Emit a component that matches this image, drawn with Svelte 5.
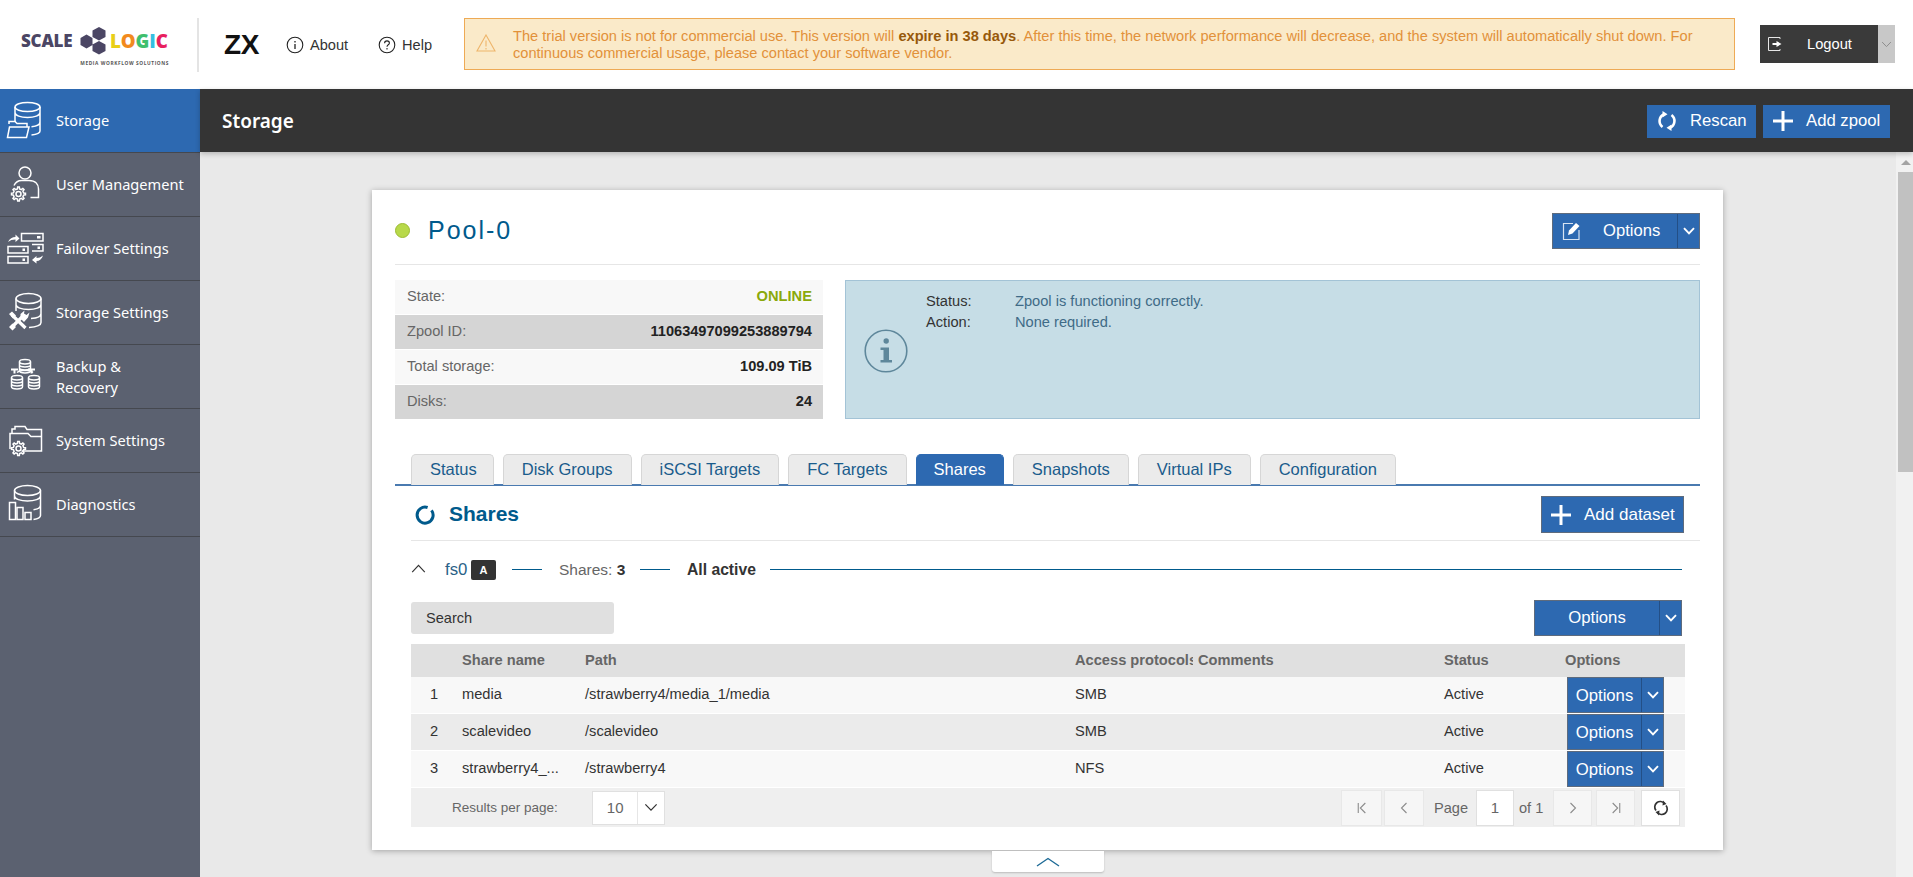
<script>
  const nav = [
    { k: 'storage', label: 'Storage', active: true },
    { k: 'user', label: 'User Management' },
    { k: 'failover', label: 'Failover Settings' },
    { k: 'settings', label: 'Storage Settings' },
    { k: 'backup', label: 'Backup & Recovery' },
    { k: 'system', label: 'System Settings' },
    { k: 'diag', label: 'Diagnostics' }
  ];
  const tabs = ['Status', 'Disk Groups', 'iSCSI Targets', 'FC Targets', 'Shares', 'Snapshots', 'Virtual IPs', 'Configuration'];
  const facts = [
    ['State:', 'ONLINE'],
    ['Zpool ID:', '11063497099253889794'],
    ['Total storage:', '109.09 TiB'],
    ['Disks:', '24']
  ];
  const rows = [
    ['1', 'media', '/strawberry4/media_1/media', 'SMB'],
    ['2', 'scalevideo', '/scalevideo', 'SMB'],
    ['3', 'strawberry4_...', '/strawberry4', 'NFS']
  ];
  function gear(cx, cy, r) {
    const n = 8;
    let d = '';
    for (let i = 0; i < n; i++) {
      const a = (i / n) * Math.PI * 2;
      const s = Math.PI / n;
      const pts = [
        [a - s * 0.55, r * 0.8],
        [a - s * 0.3, r * 1.08],
        [a + s * 0.3, r * 1.08],
        [a + s * 0.55, r * 0.8]
      ];
      for (const [t, l] of pts) {
        d += (d ? 'L' : 'M') + (cx + Math.cos(t) * l).toFixed(2) + ' ' + (cy + Math.sin(t) * l).toFixed(2);
      }
    }
    return d + 'Z';
  }
</script>

{#snippet chevron(cls)}
  <svg class={cls} viewBox="0 0 12 8" aria-hidden="true"><path d="M1 1.200 6 6.400l5-5.200" fill="none" stroke="currentColor" stroke-width={cls === 'caret' ? 1.9 : 1.1}/></svg>
{/snippet}

{#snippet plus()}
  <svg class="plus" viewBox="0 0 20 20" aria-hidden="true"><path d="M10 0v20M0 10h20" stroke="#fff" stroke-width="3"/></svg>
{/snippet}

{#snippet minicyl(x, y)}
  <ellipse cx={x + 6} cy={y + 2.2} rx="5.500" ry="2.200"/>
  <path d="M{x + 0.5} {y + 2.2}v9c0 1.200 2.500 2.200 5.500 2.200s5.500-1 5.500-2.200v-9M{x + 0.5} {y + 5.2}c0 1.200 2.500 2.200 5.500 2.200s5.500-1 5.500-2.200M{x + 0.5} {y + 8.2}c0 1.200 2.500 2.200 5.500 2.200s5.500-1 5.500-2.200"/>
{/snippet}

<div class="page">
  <header class="top">
    <div class="logo">
      <div class="logo-main">
        <span class="scale">SCALE</span>
        <svg class="hex" viewBox="0 0 31 29" aria-hidden="true">
          <path fill="#4b4664" d="M9.500 8.500l6 3.500v7l-6 3.500-6-3.500v-7zM22 1l6.500 3.500V11L22 14.500 15.500 11V4.500zM22 15l6.500 3.500V25L22 28.500 15.500 25v-6.500z"/>
        </svg>
        <span class="logic"><i class="c1">L</i><i class="c2">O</i><i class="c3">G</i><i class="c4">I</i><i class="c5">C</i></span>
      </div>
      <div class="tagline">MEDIA WORKFLOW SOLUTIONS</div>
    </div>
    <div class="vr"></div>
    <div class="zx">ZX</div>
    <a class="toplink about">
      <svg viewBox="0 0 18 18" aria-hidden="true"><circle cx="9" cy="9" r="7.800" fill="none" stroke="#222" stroke-width="1.100"/><path d="M9 8v5M9 5v1.500" stroke="#222" stroke-width="1.300"/></svg>
      About
    </a>
    <a class="toplink help">
      <svg viewBox="0 0 18 18" aria-hidden="true"><circle cx="9" cy="9" r="7.800" fill="none" stroke="#222" stroke-width="1.100"/><path d="M6.600 7.200c0-1.500 1.100-2.300 2.400-2.300s2.400.8 2.400 2.100c0 1.800-2.400 1.800-2.400 3.700M9 12v1.500" fill="none" stroke="#222" stroke-width="1.100"/></svg>
      Help
    </a>
    <div class="alert">
      <svg class="warn" viewBox="0 0 20 18" aria-hidden="true"><path d="M10 1 19 17H1zM10 6.500v6M10 14v1.500" fill="none" stroke="#eeb56b" stroke-width="1.100"/></svg>
      <p>The trial version is not for commercial use. This version will <b>expire in 38 days</b>. After this time, the network performance will decrease, and the system will automatically shut down. For continuous commercial usage, please contact your software vendor.</p>
    </div>
    <div class="logout">
      <div class="logout-main">
        <svg viewBox="0 0 16 16" aria-hidden="true"><path d="M13 3V1.500H1.500v13H13V13" fill="none" stroke="#e6e6e6" stroke-width="1"/><path d="M5.500 7h4V5l5 3-5 3V9h-4z" fill="#fff"/></svg>
        <span>Logout</span>
      </div>
      <div class="logout-caret">{@render chevron('caret-thin')}</div>
    </div>
  </header>

  <div class="shell">
    <nav class="side">
      {#each nav as n}
        <div class="nav-item" class:active={n.active}>
          <svg class="nav-icon" viewBox="0 0 44 44" aria-hidden="true">
            {#if n.k === 'storage'}
              <ellipse cx="23.500" cy="8" rx="12.500" ry="4.500"/>
              <path d="M11 8v15M36 8v24c0 2.200-4 3.500-8.500 4M11 13.500c0 3 5.600 5 12.500 5s12.500-2 12.500-5M36 23c0 2.600-4 4.300-8.500 4.800"/>
              <path d="M5 25v-2.500h6l2 2h10v3M3.500 38.500 5.500 28h19.500l-2.500 10.500z"/>
            {:else if n.k === 'user'}
              <circle cx="21" cy="10" r="6"/>
              <path d="M10 22.500c1.500-3 4-5 7.500-5h7.500c6.500 0 9.500 4 9.500 8.500v8.500h-8"/>
              <path d={gear(14.5, 31, 6.5)}/><circle cx="14.500" cy="31" r="2.500"/>
            {:else if n.k === 'failover'}
              <rect x="17.500" y="6.500" width="21.500" height="7.500"/>
              <rect x="4" y="19.500" width="20" height="6.500"/>
              <rect x="4" y="29.500" width="20" height="6.500"/>
              <path d="M28 17.500h11v6.500H28"/>
              <path class="fill" d="M33 9h3.500v2.500H33zM18.500 21.500H21v2.500h-2.500zM18.500 31.500H21v2.500h-2.500zM33.500 19.500H36V22h-2.500zM4 15c1.500-3.500 4.500-5 7.500-5V7.500l4 4-4 3.500v-2.500C8.500 12.500 6 13.300 4 15zM39 28.500c-1 3.500-3.500 5.500-6.500 5.500v2.500l-4.500-3.500 4.500-4V31c2.500 0 4.500-.8 6.500-2.500z"/>
            {:else if n.k === 'settings'}
              <ellipse cx="24.500" cy="7.500" rx="12.500" ry="5"/>
              <path d="M12 7.500V20M37 7.500v24c0 2.500-5 4.500-12 5M12 13.500c0 3 5.600 5 12.500 5s12.500-2 12.500-5M27 27.500c5.500-.3 10-2.200 10-5"/>
              <path class="thick" d="M7 37 19 25M8 24l13.500 13"/>
              <path class="fill" d="M5 23l3-2.500 4 4-3 3zM5 36l3.500 3.500 3.500-3.500-3.500-3.500zM16.500 27.500l3.500 3.500 4-4.500 1.500-5-3 2.500-2.500-1.500.5-3-4 3.500z"/>
            {:else if n.k === 'backup'}
              {@render minicyl(15, 4.5)}
              {@render minicyl(7, 20.5)}
              {@render minicyl(24, 20.5)}
              <path d="M13 17.500c1.500-1.500 3-2 6-2h4c3 0 4.500.5 6 2"/>
              <path class="fill" d="M7 13.500h7v2h-2.500v3h-2v-3H7zM24 13.500h7v2h-2.500v3h-2v-3H24z"/>
            {:else if n.k === 'system'}
              <path d="M8 14.500v-4.500h3V7.500h10l2 3h14.500v21.500h-20"/>
              <path d="M6 30V14.500h18l3 3h10"/>
              <path d={gear(14.5, 29.5, 6.5)}/><circle cx="14.500" cy="29.500" r="2.500"/>
            {:else}
              <ellipse cx="23.500" cy="7.500" rx="13" ry="5"/>
              <path d="M10.500 7.500v9M36.500 7.500v25c0 2-3 3.300-7 4M10.500 13c0 3 6 5 13 5s13-2 13-5M29.500 26.800c4-.5 7-2.200 7-4.800"/>
              <rect x="5.500" y="19.500" width="6" height="17"/>
              <rect x="13" y="24.500" width="6" height="12"/>
              <rect x="21" y="29.500" width="6" height="7"/>
            {/if}
          </svg>
          <span class="nav-label" class:wrap={n.k === 'backup'}>{n.label}</span>
        </div>
      {/each}
    </nav>

    <div class="main">
      <div class="titlebar">
        <h1>Storage</h1>
        <div class="title-actions">
          <button class="tb-btn rescan">
            <svg viewBox="0 0 20 20" aria-hidden="true"><path d="M7 3.200A7.500 7.500 0 0 0 5.500 16M13 16.800A7.500 7.500 0 0 0 14.500 4" fill="none" stroke="#fff" stroke-width="2.600"/><path d="M5.500 0v6.500l5-3.200zM14.500 20v-6.500l-5 3.200z" fill="#fff"/></svg>
            Rescan
          </button>
          <button class="tb-btn addz">{@render plus()} Add zpool</button>
        </div>
      </div>

      <div class="scroller">
        <div class="viewport">
          <section class="card">
            <div class="pool-head">
              <span class="dot"></span>
              <h2>Pool-0</h2>
              <div class="split options-top">
                <span class="split-main">
                  <svg viewBox="0 0 20 20" aria-hidden="true"><path d="M11 2.500H1.500v16h15.500V9" fill="none" stroke="#d7e3f2" stroke-width="1.200"/><path d="M6 14l1-4.500 7-7.500 3.500 3-7 7.500z" fill="#fff"/></svg>
                  Options
                </span>
                <span class="split-caret">{@render chevron('caret')}</span>
              </div>
            </div>

            <div class="overview">
              <div class="facts">
                {#each facts as f, i}
                  <div class="fact" class:dark={i % 2 === 1}>
                    <span>{f[0]}</span>
                    <b class:online={i === 0}>{f[1]}</b>
                  </div>
                {/each}
              </div>
              <div class="info">
                <svg class="info-icon" viewBox="0 0 44 44" aria-hidden="true"><circle cx="22" cy="22" r="20.800" fill="none" stroke="#5e879b" stroke-width="1.600"/><path d="M19.500 12a2.700 2.700 0 1 0 5.400 0 2.700 2.700 0 1 0-5.400 0zM16.500 18.500h8.500V31h3v2.500H16.500V31h3V21h-3z" fill="#5e879b"/></svg>
                <div class="info-grid">
                  <span>Status:</span><em>Zpool is functioning correctly.</em>
                  <span>Action:</span><em>None required.</em>
                </div>
              </div>
            </div>

            <div class="tabs">
              {#each tabs as t}
                <div class="tab" class:on={t === 'Shares'}>{t}</div>
              {/each}
            </div>

            <div class="panel">
              <div class="shares-head">
                <svg class="ring" viewBox="0 0 20 20" aria-hidden="true"><path d="M12.600 2.500A8 8 0 1 0 16.500 5.300" fill="none" stroke="#005a8c" stroke-width="3"/></svg>
                <h3>Shares</h3>
                <button class="add-ds">{@render plus()} Add dataset</button>
              </div>

              <div class="fs-row">
                <svg class="up" viewBox="0 0 16 10" aria-hidden="true"><path d="M1 9l7-7.500L15 9" fill="none" stroke="#333" stroke-width="1.300"/></svg>
                <span class="fs-name">fs0</span>
                <span class="badge">A</span>
                <i class="ln ln1"></i>
                <span class="fs-count">Shares: <b>3</b></span>
                <i class="ln ln2"></i>
                <b class="fs-active">All active</b>
                <i class="ln ln3"></i>
              </div>

              <div class="toolbar">
                <div class="search">Search</div>
                <div class="split options-mid">
                  <span class="split-main">Options</span>
                  <span class="split-caret">{@render chevron('caret')}</span>
                </div>
              </div>

              <div class="table">
                <div class="tr th">
                  <div></div><div>Share name</div><div>Path</div><div class="clip">Access protocols</div><div>Comments</div><div>Status</div><div>Options</div>
                </div>
                {#each rows as r, i}
                  <div class="tr td" class:alt={i === 1}>
                    <div class="num">{r[0]}</div><div class="tx">{r[1]}</div><div class="tx">{r[2]}</div><div class="tx">{r[3]}</div><div></div><div class="tx">Active</div>
                    <div class="cell-btn">
                      <div class="split options-row">
                        <span class="split-main">Options</span>
                        <span class="split-caret">{@render chevron('caret')}</span>
                      </div>
                    </div>
                  </div>
                {/each}
                <div class="pager">
                  <span class="rpp">Results per page:</span>
                  <div class="select"><span>10</span><span class="sel-caret">{@render chevron('caret-dark')}</span></div>
                  <div class="pgroup">
                    <span class="pbtn first"><svg viewBox="0 0 12 14"><path d="M1.500 1v12M10 1 4 7l6 6" fill="none" stroke="#8b8b8b" stroke-width="1.300"/></svg></span>
                    <span class="pbtn"><svg viewBox="0 0 12 14"><path d="M9 1 3 7l6 6" fill="none" stroke="#8b8b8b" stroke-width="1.300"/></svg></span>
                    <span class="plabel pl1">Page</span>
                    <span class="pinput">1</span>
                    <span class="plabel pl2">of 1</span>
                    <span class="pbtn nx"><svg viewBox="0 0 12 14"><path d="M3 1l6 6-6 6" fill="none" stroke="#8b8b8b" stroke-width="1.300"/></svg></span>
                    <span class="pbtn lst"><svg viewBox="0 0 12 14"><path d="M10.500 1v12M2 1l6 6-6 6" fill="none" stroke="#8b8b8b" stroke-width="1.300"/></svg></span>
                    <span class="pbtn refresh"><svg viewBox="0 0 16 16"><path d="M3 10.500A5.500 5.500 0 0 1 11.500 3.500M13 5.500A5.500 5.500 0 0 1 4.500 12.500" fill="none" stroke="#333" stroke-width="1.700"/><path d="M10 0.500l3.500 3.500-4 1.500zM6 15.500 2.500 12l4-1.500z" fill="#333"/></svg></span>
                  </div>
                </div>
              </div>
            </div>
          </section>
          <div class="collapse">
            <svg viewBox="0 0 24 10" aria-hidden="true"><path d="M1 9 12 1.500 23 9" fill="none" stroke="#1d6a96" stroke-width="1.400"/></svg>
          </div>
        </div>
        <div class="scrollbar">
          <div class="sb-up"></div>
          <div class="sb-thumb"></div>
        </div>
      </div>
    </div>
  </div>
</div>

<style>
  :global(body) { margin: 0; background: #e9e9e9; font-family: "Liberation Sans", Arial, sans-serif; color: #333; }
  * { box-sizing: border-box; }
  h1, h2, h3, p { margin: 0; }
  .page { width: 1913px; height: 877px; overflow: hidden; display: flex; flex-direction: column; }

  .top { height: 89px; background: #fff; display: flex; align-items: center; flex: none; }
  .logo { width: 197px; padding-left: 21px; display: flex; flex-direction: column; margin-top: 2px; }
  .logo-main { display: flex; align-items: center; height: 30px; }
  .scale { font: 800 17px "Open Sans", sans-serif; color: #4b4664; width: 56px; letter-spacing: -.2px; }
  .hex { width: 31px; height: 29px; flex: none; }
  .logic { font: 800 18.700px "Open Sans", sans-serif; margin-left: 2px; letter-spacing: -.1px; }
  .logic i { font-style: normal; }
  .c1 { color: #e9cf17; } .c2 { color: #f28a1e; } .c3 { color: #3fbf6e; } .c4 { color: #35bfe0; } .c5 { color: #e8205f; }
  .tagline { font: 700 4.800px "Open Sans", sans-serif; letter-spacing: .6px; color: #555; text-align: right; margin: 5px 28px 0 0; line-height: 6px; white-space: nowrap; }
  .vr { width: 2px; height: 54px; background: #e4e4e4; flex: none; }
  .zx { font: 700 28px "Liberation Sans", sans-serif; color: #111; margin-left: 25px; width: 35px; letter-spacing: -.4px; }
  .toplink { display: flex; align-items: center; gap: 6px; font-size: 14.600px; color: #333; }
  .toplink svg { width: 18px; height: 18px; }
  .about { margin-left: 27px; width: 92px; }
  .help { width: 86px; }
  .alert { width: 1271px; height: 52px; margin-top: -1px; background: #faeac9; border: 1px solid #eeaa55; display: flex; align-items: center; flex: none; padding: 1px 0 0 11px; }
  .warn { width: 20px; height: 18px; flex: none; margin-top: -4px; margin-right: 17px; }
  .alert p { font-size: 14.620px; line-height: 16.500px; color: #e2913a; width: 1212px; }
  .alert b { color: #97590b; }
  .logout { display: flex; margin-left: 25px; height: 38px; flex: none; margin-top: -1px; }
  .logout-main { width: 118px; background: #3a3a3a; color: #fff; display: flex; align-items: center; font-size: 14.700px; padding-left: 7px; }
  .logout-main svg { width: 16px; height: 16px; }
  .logout-main span { margin-left: 24px; }
  .logout-caret { width: 17px; background: #c8c8c8; display: flex; align-items: center; justify-content: center; color: #8b8b8b; }
  .caret-thin { width: 11px; height: 7px; }

  .shell { display: flex; flex: 1; min-height: 0; }
  .side { width: 200px; background: #5b6170; flex: none; }
  .nav-item { height: 64px; border-bottom: 1px solid #45484f; display: flex; align-items: center; padding-left: 4px; color: #fff; }
  .nav-item.active { background: #2d69b1; }
  .nav-icon { width: 44px; height: 44px; flex: none; fill: none; stroke: #fff; stroke-width: 1.500; }
  .nav-icon .fill { fill: #fff; stroke: none; }
  .nav-icon .thick { stroke-width: 3.200; }
  .nav-label { font: 400 14.600px/21px "Noto Sans", sans-serif; margin-left: 8px; white-space: nowrap; }
  .nav-label.wrap { white-space: normal; width: 90px; }

  .main { flex: 1; min-width: 0; display: flex; flex-direction: column; }
  .titlebar { height: 63px; background: #343434; display: flex; align-items: center; flex: none; padding-left: 22px; box-shadow: 0 2px 5px rgba(0,0,0,.22); position: relative; z-index: 1; }
  .titlebar h1 { font: 600 19px "Noto Sans", sans-serif; color: #fff; }
  .title-actions { margin-left: auto; display: flex; gap: 7px; margin-right: 23px; margin-top: 1px; }
  .tb-btn { height: 33px; background: #2d69b1; border: 0; color: #fff; font: 400 16.700px "Liberation Sans", sans-serif; display: flex; align-items: center; padding: 0; }
  .rescan { width: 109px; padding-left: 10px; gap: 13px; }
  .rescan svg { width: 20px; height: 20px; }
  .addz { width: 127px; padding-left: 10px; gap: 13px; }
  .plus { width: 20px; height: 20px; flex: none; }

  .scroller { flex: 1; display: flex; min-height: 0; }
  .viewport { flex: 1; padding: 38px 0 0 172px; min-width: 0; }
  .card { width: 1351px; height: 660px; background: #fff; box-shadow: 0 1px 6px rgba(0,0,0,.3); padding: 0 23px; }
  .pool-head { height: 75px; border-bottom: 1px solid #e6e6e6; display: flex; align-items: center; padding-top: 7px; }
  .dot { width: 15px; height: 15px; border-radius: 50%; background: #b8d94a; border: 1px solid #9dbb33; flex: none; }
  .pool-head h2 { font: 400 25px "Liberation Sans", sans-serif; color: #005a8c; margin-left: 18px; letter-spacing: 2px; }
  .split { display: flex; background: #2d69b1; border: 1px solid #5e6b7d; color: #fff; }
  .split-main { display: flex; align-items: center; justify-content: center; flex: 1; }
  .split-caret { display: flex; align-items: center; justify-content: center; border-left: 1px solid #234f86; }
  .caret { width: 12px; height: 8px; }
  .options-top { margin-left: auto; width: 148px; height: 36px; font-size: 16.600px; }
  .options-top .split-main { gap: 21px; justify-content: flex-start; padding-left: 9px; }
  .options-top .split-main svg { width: 20px; height: 20px; }
  .options-top .split-caret { width: 22px; }

  .overview { display: flex; margin-top: 15px; height: 139px; }
  .facts { width: 428px; display: flex; flex-direction: column; gap: 1px; }
  .fact { flex: 1; background: #f8f8f8; display: flex; align-items: center; justify-content: space-between; padding: 0 11px 2px 12px; font-size: 14.600px; color: #666; }
  .fact.dark { background: #d5d5d5; }
  .fact b { color: #222; font-size: 14.600px; }
  .fact b.online { color: #8aa90b; font-size: 14.700px; }
  .info { margin-left: 22px; width: 855px; background: #c6dde6; border: 1px solid #a3c3d6; display: flex; }
  .info-icon { width: 44px; height: 44px; margin: 48px 0 0 18px; flex: none; }
  .info-grid { margin: 9px 0 0 18px; display: grid; grid-template-columns: 89px auto; grid-auto-rows: 21px; font-size: 14.650px; align-items: center; align-content: start; }
  .info-grid span { color: #333; }
  .info-grid em { font-style: normal; color: #3f6b87; }

  .tabs { margin-top: 35px; height: 32px; border-bottom: 2px solid #4a7ab0; display: flex; padding-left: 16px; gap: 9px; }
  .tab { height: 31px; padding: 0 18px 1px; background: #ebebeb; border: 1px solid #d6d6d6; border-bottom: 0; border-radius: 5px 5px 0 0; font-size: 16.500px; color: #1a5c8c; display: flex; align-items: center; }
  .tab:first-child { padding-right: 16px; }
  .tab.on { background: #2d69b1; border-color: #2d69b1; color: #fff; padding: 0 17px 1px; }

  .panel { padding: 0 16px; }
  .shares-head { height: 55px; border-bottom: 1px solid #e6e6e6; margin-right: -16px; display: flex; align-items: center; padding-right: 16px; padding-left: 4px; }
  .ring { width: 20px; height: 20px; flex: none; margin-top: 3px; }
  .shares-head h3 { font-size: 21px; font-weight: 700; color: #005a8c; margin-left: 14px; margin-top: 2px; }
  .add-ds { margin-left: auto; width: 143px; height: 37px; margin-top: 3px; background: #2d69b1; border: 1px solid #5e6b7d; color: #fff; font: 400 17px "Liberation Sans", sans-serif; display: flex; align-items: center; padding: 0 0 0 9px; gap: 13px; }

  .fs-row { height: 59px; display: flex; align-items: center; padding-bottom: 2px; }
  .up { width: 15px; height: 9px; flex: none; margin-right: 19px; margin-top: -3px; }
  .fs-name { font-size: 16.800px; color: #2a6287; width: 26px; }
  .badge { width: 25px; height: 20px; background: #333; color: #fff; font-size: 11px; font-weight: 700; border-radius: 2px; display: flex; align-items: center; justify-content: center; }
  .ln { height: 1px; background: #005a8c; display: block; }
  .ln1 { width: 30px; margin: 0 17px 0 16px; }
  .fs-count { font-size: 15.500px; color: #666; width: 81px; white-space: nowrap; }
  .fs-count b { color: #333; }
  .ln2 { width: 30px; margin-right: 17px; }
  .fs-active { font-size: 15.700px; color: #333; width: 83px; white-space: nowrap; }
  .ln3 { flex: 1; margin-right: 2px; }

  .toolbar { display: flex; align-items: center; justify-content: space-between; height: 36px; padding-right: 2px; }
  .search { width: 203px; height: 32px; background: #e0e0e0; border-radius: 3px; font-size: 14.600px; color: #333; display: flex; align-items: center; padding-left: 15px; }
  .options-mid { width: 148px; height: 36px; font-size: 16.700px; }
  .options-mid .split-caret { width: 22px; }

  .table { margin-top: 8px; width: 1274px; }
  .tr { display: grid; grid-template-columns: 51px 123px 490px 123px 246px 121px 120px; align-items: center; font-size: 14.650px; }
  .th { height: 33px; background: #e0e0e0; font-weight: 700; color: #666; padding-bottom: 2px; }
  .clip { overflow: hidden; white-space: nowrap; margin-right: 5px; }
  .td { height: 37px; background: #f8f8f8; border-bottom: 1px solid #fff; }
  .td.alt { background: #ebebeb; }
  .tx, .num { padding-bottom: 3px; }
  .num { text-align: center; padding-right: 5px; }
  .cell-btn { padding-left: 2px; }
  .options-row { width: 97px; height: 36px; font-size: 16.700px; }
  .options-row .split-main { padding-top: 1px; }
  .options-row .split-caret { width: 22px; }

  .pager { height: 39px; background: #efefef; display: flex; align-items: center; font-size: 13.500px; color: #666; }
  .rpp { margin-left: 41px; width: 140px; }
  .select { width: 73px; height: 34px; background: #fff; border: 1px solid #e0e0e0; display: flex; align-items: center; font-size: 15px; }
  .select > span:first-child { width: 45px; text-align: center; }
  .sel-caret { width: 27px; height: 100%; border-left: 1px solid #e6e6e6; display: flex; align-items: center; justify-content: center; color: #333; }
  .caret-dark { width: 14px; height: 9px; }
  .pgroup { margin-left: auto; display: flex; align-items: center; margin-right: 5px; }
  .pbtn { width: 40px; height: 36px; background: #f6f6f6; border: 1px solid #e8e8e8; display: flex; align-items: center; justify-content: center; }
  .pbtn svg { width: 10px; height: 12px; }
  .pbtn.first { width: 41px; margin-right: 2px; }
  .pbtn.nx { width: 39px; margin-right: 4px; }
  .pbtn.lst { width: 39px; margin-right: 6px; }
  .pbtn.refresh { width: 39px; background: #fff; border: 1px solid #e0e0e0; }
  .pbtn.refresh svg { width: 16px; height: 16px; }
  .plabel { font-size: 14.600px; color: #666; }
  .pl1 { margin-left: 10px; width: 42px; }
  .pl2 { margin-left: 5px; width: 34px; }
  .pinput { width: 38px; height: 36px; background: #fff; border: 1px solid #e0e0e0; display: flex; align-items: center; justify-content: center; font-size: 15px; color: #666; }

  .collapse { width: 112px; height: 21px; margin: 1px 0 0 620px; background: #fff; border-radius: 0 0 3px 3px; box-shadow: 0 1px 2px rgba(0,0,0,.2); display: flex; align-items: center; justify-content: center; }
  .collapse svg { width: 24px; height: 10px; }

  .scrollbar { width: 17px; background: #f1f1f1; flex: none; display: flex; flex-direction: column; align-items: flex-end; }
  .sb-up { width: 0; height: 0; border-left: 5px solid transparent; border-right: 5px solid transparent; border-bottom: 5px solid #a3a3a3; margin: 8px 2px 7px 0; }
  .sb-thumb { width: 15px; height: 300px; background: #c1c1c1; }
</style>
